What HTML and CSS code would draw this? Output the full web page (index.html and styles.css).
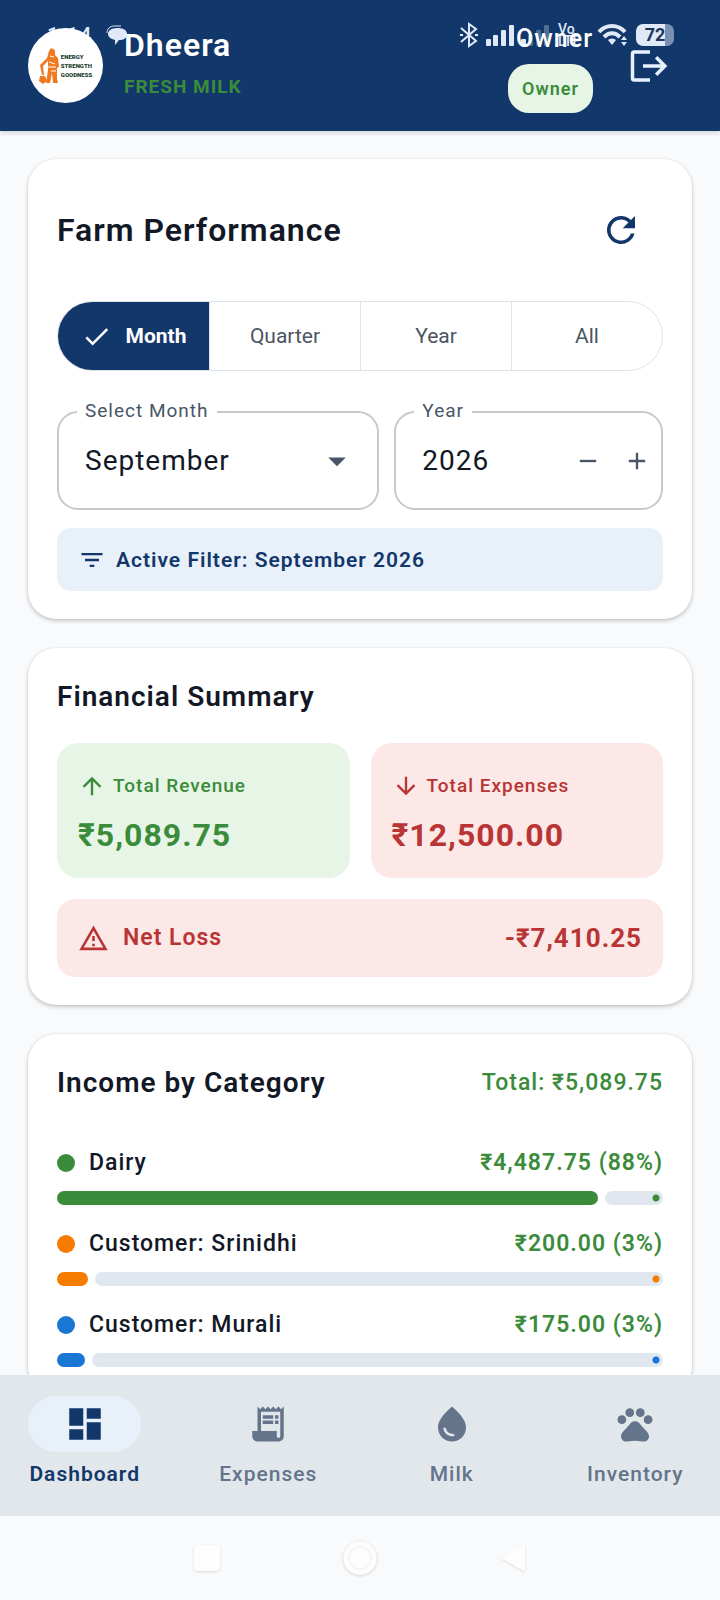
FILE: index.html
```html
<!DOCTYPE html>
<html lang="en">
<head>
    <meta charset="UTF-8">
    <meta name="viewport" content="width=device-width, initial-scale=1.0">
    <title>Dheera Dashboard</title>
    <link rel="stylesheet" href="styles.css">
</head>
<body>
    <header class="app-header">
        <!-- System status bar, sits under the header content -->
        <div class="status-bar">
            <span class="status-time">1:14</span>
            <svg class="status-chat" width="22" height="20" viewBox="0 0 22 20"><path d="M1 8C1 4 4 1 8 1h7" fill="none" stroke="currentColor" stroke-width="1"/><path d="M11 3c6 0 10 2 10 6s-3 6-8 6l-4 5v-5c-4-1-7-3-7-6s3-6 9-6z" fill="currentColor"/></svg>
            <div class="status-icons">
                <svg width="20" height="26" viewBox="0 0 20 26" fill="none" stroke="currentColor" stroke-width="2"><path d="M2 6l15 13-7 5V2l7 5L2 20M1 13h3M16 13h3"/></svg>
                <svg width="28" height="22" viewBox="0 0 28 22" fill="currentColor"><rect y="15" width="5" height="7" rx="1"/><rect x="7" y="11" width="5" height="11" rx="1"/><rect x="15" y="6" width="5" height="16" rx="1"/><rect x="23" y="1" width="5" height="21" rx="1"/></svg>
                <svg width="28" height="22" viewBox="0 0 28 22" fill="currentColor"><rect y="15" width="5" height="7" rx="1"/><g opacity=".3"><rect x="7" y="11" width="5" height="11" rx="1"/><rect x="15" y="6" width="5" height="16" rx="1"/><rect x="23" y="1" width="5" height="21" rx="1"/></g></svg>
                <span class="status-volte">Vo<br>LTE</span>
                <svg width="32" height="24" viewBox="0 0 32 24" fill="none" stroke="currentColor" stroke-width="4"><path d="M2 9C9 1 21 1 28 9"/><path d="M7 14c5-5 11-5 16 0"/><path d="M11 17c3-2 5-2 8 0l-4 5z" fill="currentColor" stroke="none"/><path d="M24 17l3-4 3 4zM24 19h6l-3 4z" fill="currentColor" stroke="none"/></svg>
                <span class="status-battery">72</span>
            </div>
        </div>

        <div class="logo">
            <svg width="20" height="36" viewBox="0 0 20 36" fill="#ee7b23"><path d="M10 3l2-3 4 2v5l3 3 1 9-2 1v11l1 4h-5l-1-10-2 10H7l2-13V13l-5 5 1 9H3L1 17l7-7z"/><path d="M1 28h5l2 5-4 3-4-3z"/><path d="M16 5c4-1 3 5 2 4M10 14l6 2M9 19h8M11 8l4 1M12 23h5" fill="none" stroke="#fff" stroke-width="1"/></svg>
            <span class="logo-text">ENERGY<br>STRENGTH<br>GOODNESS</span>
        </div>
        <div class="brand">
            <div class="brand-name">Dheera</div>
            <div class="brand-tagline">FRESH MILK</div>
        </div>
        <div class="account">
            <div class="account-name">Owner</div>
            <div class="account-role">Owner</div>
        </div>
        <button class="icon-btn logout" aria-label="Log out">
            <svg width="42" height="42" viewBox="0 0 24 24" fill="none" stroke="currentColor" stroke-width="2"><path d="M12 4H3c-.6 0-1 .4-1 1v14c0 .6.4 1 1 1h9M8 12h12M15.500 7l5 5-5 5"/></svg>
        </button>
    </header>

    <main class="content">
        <section class="card">
            <div class="performance-header">
                <h1>Farm Performance</h1>
                <button class="icon-btn" aria-label="Refresh">
                    <svg width="42" height="42" viewBox="0 0 24 24" fill="currentColor"><path d="M17.65 6.35A7.96 7.96 0 0 0 12 4a8 8 0 1 0 7.73 10h-2.08A6 6 0 1 1 12 6c1.66 0 3.14.69 4.22 1.78L13 11h7V4l-2.35 2.35z"/></svg>
                </button>
            </div>

            <div class="segments" role="radiogroup" aria-label="Period">
                <label class="segment">
                    <input type="radio" name="period" checked>
                    <svg width="31" height="31" viewBox="0 0 24 24" fill="currentColor"><path d="M9 16.17L4.83 12l-1.42 1.41L9 19 21 7l-1.41-1.41z"/></svg>
                    <span>Month</span>
                </label>
                <label class="segment"><input type="radio" name="period"><span>Quarter</span></label>
                <label class="segment"><input type="radio" name="period"><span>Year</span></label>
                <label class="segment"><input type="radio" name="period"><span>All</span></label>
            </div>

            <div class="fields">
                <div class="field">
                    <label class="field-label" for="month">Select Month</label>
                    <select class="field-control" id="month">
                        <option>September</option>
                    </select>
                    <svg class="field-arrow" width="42" height="42" viewBox="0 0 24 24" fill="currentColor"><path d="M7 10l5 5 5-5z"/></svg>
                </div>
                <div class="field">
                    <label class="field-label" for="year">Year</label>
                    <input class="field-control" id="year" type="text" inputmode="numeric" value="2026">
                    <button class="step-btn" aria-label="Previous year">
                        <svg width="28" height="28" viewBox="0 0 24 24" fill="currentColor"><path d="M5 11h14v2H5z"/></svg>
                    </button>
                    <button class="step-btn" aria-label="Next year">
                        <svg width="28" height="28" viewBox="0 0 24 24" fill="currentColor"><path d="M19 13h-6v6h-2v-6H5v-2h6V5h2v6h6z"/></svg>
                    </button>
                </div>
            </div>

            <div class="active-filter">
                <svg width="28" height="28" viewBox="0 0 24 24" fill="currentColor"><path d="M10 18h4v-2h-4v2zM3 6v2h18V6H3zm3 7h12v-2H6v2z"/></svg>
                Active Filter: September 2026
            </div>
        </section>

        <section class="card">
            <h2>Financial Summary</h2>
            <div class="totals">
                <div class="total income">
                    <div class="total-label">
                        <svg width="28" height="28" viewBox="0 0 24 24" fill="currentColor"><path d="M4 12l1.41 1.41L11 7.83V20h2V7.83l5.58 5.59L20 12l-8-8z"/></svg>
                        Total Revenue
                    </div>
                    <div class="total-amount">₹5,089.75</div>
                </div>
                <div class="total expense">
                    <div class="total-label">
                        <svg width="28" height="28" viewBox="0 0 24 24" fill="currentColor"><path d="M20 12l-1.41-1.41L13 16.17V4h-2v12.17l-5.58-5.59L4 12l8 8z"/></svg>
                        Total Expenses
                    </div>
                    <div class="total-amount">₹12,500.00</div>
                </div>
            </div>
            <div class="net expense">
                <svg width="31" height="31" viewBox="0 0 24 24" fill="currentColor"><path d="M12 5.99L19.53 19H4.47L12 5.99M12 2L1 21h22zM13 16h-2v2h2zM13 10h-2v4h2z"/></svg>
                <span>Net Loss</span>
                <span class="net-amount">-₹7,410.25</span>
            </div>
        </section>

        <section class="card">
            <div class="category-header">
                <h2>Income by Category</h2>
                <span class="category-total">Total: ₹5,089.75</span>
            </div>
            <div class="categories">
                <div class="category green">
                    <div class="category-row">
                        <span class="dot"></span>
                        <span>Dairy</span>
                        <span class="category-amount">₹4,487.75 (88%)</span>
                    </div>
                    <div class="bar"><div class="bar-fill" style="width: 88.17%"></div><div class="bar-track"></div></div>
                </div>
                <div class="category orange">
                    <div class="category-row">
                        <span class="dot"></span>
                        <span>Customer: Srinidhi</span>
                        <span class="category-amount">₹200.00 (3%)</span>
                    </div>
                    <div class="bar"><div class="bar-fill" style="width: 3.93%"></div><div class="bar-track"></div></div>
                </div>
                <div class="category blue">
                    <div class="category-row">
                        <span class="dot"></span>
                        <span>Customer: Murali</span>
                        <span class="category-amount">₹175.00 (3%)</span>
                    </div>
                    <div class="bar"><div class="bar-fill" style="width: 3.44%"></div><div class="bar-track"></div></div>
                </div>
            </div>
        </section>
    </main>

    <nav class="tabs">
        <a class="tab active" href="#dashboard">
            <span class="tab-icon"><svg width="42" height="42" viewBox="0 0 24 24" fill="currentColor"><path d="M3 13h8V3H3v10zm0 8h8v-6H3v6zm10 0h8V11h-8v10zm0-18v6h8V3h-8z"/></svg></span>
            Dashboard
        </a>
        <a class="tab" href="#expenses">
            <span class="tab-icon"><svg width="42" height="42" viewBox="0 0 24 24" fill="currentColor"><path d="M19.5 3.5L18 2l-1.5 1.5L15 2l-1.5 1.5L12 2l-1.5 1.5L9 2 7.5 3.5 6 2v14H3v3c0 1.66 1.34 3 3 3h12c1.66 0 3-1.34 3-3V2l-1.5 1.5zM19 19c0 .55-.45 1-1 1s-1-.45-1-1v-3H8V5h11v14z"/><path d="M9 7h6v2H9zM16 7h2v2h-2zM9 10h6v2H9zM16 10h2v2h-2z"/></svg></span>
            Expenses
        </a>
        <a class="tab" href="#milk">
            <span class="tab-icon"><svg width="42" height="42" viewBox="0 0 24 24" fill="currentColor"><path d="M12 2c-5.33 4.55-8 8.48-8 11.8 0 4.98 3.8 8.2 8 8.2s8-3.22 8-8.2C20 10.48 17.33 6.55 12 2zm.8 17c-3 .2-5.3-1.8-5.7-4.2-.1-.9 1.2-1.1 1.4-.2.5 2.2 2.3 3.1 3.9 2.9 1.2 0 1.3 1.4.4 1.5z"/></svg></span>
            Milk
        </a>
        <a class="tab" href="#inventory">
            <span class="tab-icon"><svg width="42" height="42" viewBox="0 0 24 24" fill="currentColor"><circle cx="4.5" cy="9.5" r="2.5"/><circle cx="9" cy="5.5" r="2.5"/><circle cx="15" cy="5.5" r="2.5"/><circle cx="19.5" cy="9.5" r="2.5"/><path d="M17.34 14.86c-.87-1.02-1.6-1.89-2.48-2.91-.46-.54-1.05-1.08-1.75-1.32-.72-.24-1.5-.24-2.22 0-.7.24-1.28.78-1.75 1.32-.87 1.02-1.6 1.89-2.48 2.91-1.31 1.31-2.92 2.76-2.62 4.79.29 1.02 1.02 2.03 2.33 2.32.73.15 3.06-.44 5.54-.44h.18c2.48 0 4.81.58 5.54.44 1.31-.29 2.04-1.31 2.33-2.32.31-2.04-1.3-3.49-2.61-4.8z"/></svg></span>
            Inventory
        </a>
    </nav>

    <div class="system-nav">
        <svg width="42" height="42" viewBox="0 0 42 42"><rect x="8" y="8" width="26" height="26" rx="4"/></svg>
        <svg width="42" height="42" viewBox="0 0 42 42"><circle cx="21" cy="21" r="17"/><circle cx="21" cy="21" r="11"/></svg>
        <svg width="42" height="42" viewBox="0 0 42 42"><path d="M33 7v28L9 21z"/></svg>
    </div>
</body>
</html>
```
FILE: styles.css
```css
* {
    box-sizing: border-box;
}

body {
    margin: 0;
    height: 100vh;
    display: flex;
    flex-direction: column;
    overflow: hidden;
    font-family: Roboto, "Noto Sans", sans-serif;
    font-size: 23px;
    font-weight: 500;
    line-height: 42px;
    letter-spacing: 1px;
    color: #121826;
    background: #f8fafc;
}

button, input, select {
    font: inherit;
    letter-spacing: inherit;
    color: inherit;
    border: none;
    background: none;
    padding: 0;
    margin: 0;
}

svg {
    display: block;
    flex: none;
}

h1, h2 {
    margin: 0;
    font-weight: 600;
}

h1 {
    font-size: 32px;
}

h2 {
    font-size: 28px;
}

/* Header */
.app-header {
    position: relative;
    z-index: 1;
    flex: none;
    display: flex;
    align-items: center;
    height: 131px;
    padding: 0 28px;
    color: #fff;
    background: #12376a;
    box-shadow: 0 2px 5px rgba(0, 0, 0, 0.15);
}

.status-bar {
    position: absolute;
    top: 21px;
    left: 47px;
    right: 46px;
    display: flex;
    align-items: center;
    height: 28px;
    color: #dfe9f8;
}

.status-time {
    font-size: 21px;
    line-height: 28px;
}

.status-chat {
    margin-left: 14px;
}

.status-icons {
    display: flex;
    align-items: center;
    gap: 7px;
    margin-left: auto;
}

.status-volte {
    width: 34px;
    padding-left: 2px;
    font-size: 14px;
    line-height: 12px;
    letter-spacing: 0;
}

.status-battery {
    width: 38px;
    border-radius: 7px;
    font-size: 18px;
    font-weight: 700;
    line-height: 22px;
    letter-spacing: 0;
    text-align: center;
    color: #1b3557;
    background: linear-gradient(to right, #dfe9f8 76%, #7990b0 76%);
}

.logo {
    position: relative;
    display: flex;
    align-items: center;
    justify-content: center;
    gap: 2px;
    width: 75px;
    height: 75px;
    border-radius: 50%;
    background: #fff;
}

.logo-text {
    font-size: 6px;
    font-weight: 900;
    line-height: 9px;
    letter-spacing: 0;
    color: #173d2c;
}

.brand {
    position: relative;
    margin-left: 21px;
}

.brand-name {
    font-size: 32px;
    font-weight: 600;
}

.brand-tagline {
    font-size: 19px;
    font-weight: 700;
    color: #3b8c3a;
}

.account {
    position: relative;
    display: flex;
    flex-direction: column;
    align-items: flex-end;
    gap: 4px;
    margin-left: auto;
}

.account-name {
    font-size: 25px;
}

.account-role {
    padding: 0 14px;
    border-radius: 21px;
    font-size: 18px;
    font-weight: 600;
    line-height: 49px;
    color: #3b8c3a;
    background: #e7f5e6;
}

.icon-btn {
    display: flex;
    align-items: center;
    justify-content: center;
    width: 84px;
    height: 86px;
    color: #12376a;
}

.logout {
    position: relative;
    margin-left: 15px;
    color: #e7f2ff;
}

/* Cards */
.content {
    flex: 1;
    min-height: 0;
    overflow: hidden;
    padding: 28px;
}

.card {
    margin-bottom: 29px;
    padding: 28px 29px;
    border-radius: 28px;
    background: #fff;
    box-shadow: 0 0 2px rgba(0, 0, 0, 0.1), 0 2px 4px rgba(0, 0, 0, 0.2);
}

.performance-header {
    display: flex;
    align-items: center;
    justify-content: space-between;
}

.segments {
    display: grid;
    grid-template-columns: repeat(4, 1fr);
    height: 70px;
    margin-top: 28px;
    border: 1px solid #dce3eb;
    border-radius: 35px;
    overflow: hidden;
}

.segment {
    display: flex;
    align-items: center;
    justify-content: center;
    gap: 14px;
    font-size: 21px;
    font-weight: 400;
    letter-spacing: 0;
    color: #4b5563;
}

.segment + .segment {
    border-left: 1px solid #dce3eb;
}

.segment input {
    position: absolute;
    opacity: 0;
}

.segment:has(input:checked) {
    font-weight: 700;
    color: #fff;
    background: #12376a;
}

.fields {
    display: grid;
    grid-template-columns: minmax(0, 6fr) minmax(0, 5fr);
    gap: 15px;
    margin-top: 40px;
}

.field {
    position: relative;
    display: flex;
    align-items: center;
    height: 99px;
    border: 2px solid #c8c9cb;
    border-radius: 21px;
    color: #475569;
}

.field-label {
    position: absolute;
    top: -16px;
    left: 18px;
    padding: 0 8px;
    font-size: 19px;
    font-weight: 400;
    line-height: 28px;
    background: #fff;
}

.field-control {
    flex: 1;
    min-width: 0;
    height: 100%;
    padding: 0 26px;
    appearance: none;
    font-size: 28px;
    font-weight: 400;
    color: #121826;
}

.field-arrow {
    position: absolute;
    right: 19px;
    pointer-events: none;
}

.step-btn {
    display: flex;
    justify-content: center;
    width: 49px;
}

.active-filter {
    display: flex;
    align-items: center;
    gap: 10px;
    height: 63px;
    margin-top: 18px;
    padding: 0 21px;
    border-radius: 14px;
    font-size: 21px;
    font-weight: 600;
    color: #12376a;
    background: #e8f1fa;
}

/* Financial summary */
.totals {
    display: grid;
    grid-template-columns: 1fr 1fr;
    gap: 21px;
    margin: 25px 0 21px;
}

.total {
    padding: 22px 21px;
    border-radius: 21px;
}

.income {
    color: #3b8c3a;
    background: #e7f5e6;
}

.expense {
    color: #b93434;
    background: #fce8e7;
}

.total-label {
    display: flex;
    align-items: center;
    gap: 7px;
    font-size: 19px;
}

.total-amount {
    margin-top: 7px;
    font-size: 32px;
    font-weight: 700;
}

.net {
    display: flex;
    align-items: center;
    gap: 14px;
    height: 78px;
    padding: 0 21px;
    border-radius: 18px;
    font-weight: 600;
}

.net-amount {
    margin-left: auto;
    font-size: 26px;
    font-weight: 700;
}

/* Income by category */
.category-header {
    display: flex;
    align-items: center;
    justify-content: space-between;
    margin-bottom: 38px;
}

.category-total {
    color: #3b8c3a;
}

.categories {
    display: grid;
    gap: 18px;
}

.green {
    --accent: #3b8c3a;
}

.orange {
    --accent: #f57c00;
}

.blue {
    --accent: #1976d2;
}

.category-row {
    display: flex;
    align-items: center;
    gap: 14px;
    line-height: 42px;
}

.dot {
    width: 18px;
    height: 18px;
    border-radius: 50%;
    background: var(--accent);
}

.category-amount {
    margin-left: auto;
    font-weight: 600;
    color: #3b8c3a;
}

.bar {
    display: flex;
    gap: 7px;
    height: 14px;
    margin-top: 7px;
}

/* rounded cap adds 7px to the share of the total */
.bar-fill {
    flex: none;
    box-sizing: content-box;
    padding-right: 7px;
    border-radius: 7px;
    background: var(--accent);
}

.bar-track {
    flex: 1;
    border-radius: 7px;
    background: radial-gradient(circle at calc(100% - 7px) 50%, var(--accent) 3px, transparent 4px) #e0e7ee;
}

/* Bottom navigation */
.tabs {
    flex: none;
    display: grid;
    grid-template-columns: repeat(4, 1fr);
    gap: 14px;
    height: 141px;
    padding-top: 21px;
    background: #e2e7eb;
}

.tab {
    display: flex;
    flex-direction: column;
    align-items: center;
    gap: 1px;
    font-size: 21px;
    color: #64748b;
    text-decoration: none;
}

.tab-icon {
    display: flex;
    align-items: center;
    justify-content: center;
    width: 113px;
    height: 56px;
    border-radius: 28px;
}

.active {
    font-weight: 600;
    color: #12376a;
}

.active .tab-icon {
    background: #e8f1fa;
}

.system-nav {
    flex: none;
    display: flex;
    align-items: center;
    justify-content: center;
    gap: 111px;
    height: 84px;
    fill: #fdfdfe;
}

.system-nav svg {
    filter: drop-shadow(0 1px 1px rgba(0, 0, 0, 0.12));
}

.system-nav circle {
    stroke: #eceef0;
}
```
